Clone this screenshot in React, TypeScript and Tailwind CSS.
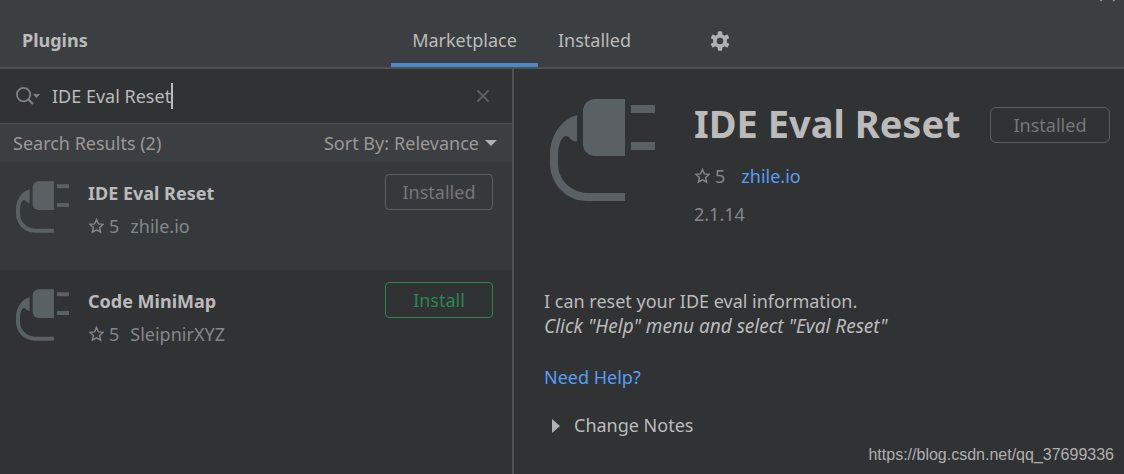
import { useState } from "react";

function PlugIcon({ className }: { className: string }) {
  return (
    <svg viewBox="0 0 105 102" className={className} fill="#5a6165" aria-hidden="true">
      <path d="M27 16C12 20 0 36 0 56V66C1 86 17 102 37 102H75V94H37C20 93 8 80 8 65V58C8 47 11 37 16 37C20 37 20 42.5 27 42.5Z" />
      <path d="M45 0H75V57H45A12 12 0 0 1 33 45V12A12 12 0 0 1 45 0Z" />
      <path d="M81 6H105V14H81ZM81 43H105V51H81Z" />
    </svg>
  );
}

function StarIcon() {
  return (
    <svg viewBox="0 0 16 16" className="size-4 shrink-0" fill="none" stroke="#85878a" strokeWidth="1.4" aria-hidden="true">
      <path d="M8.500 1.500L10.400 5.900L15 6.400L11.600 9.500L12.600 14.200L8.500 11.800L4.400 14.200L5.400 9.500L2 6.400L6.600 5.900Z" />
    </svg>
  );
}

function SearchIcon() {
  return (
    <svg viewBox="0 0 24 18" className="h-[18px] w-6" aria-hidden="true">
      <circle cx="7.6" cy="7.6" r="6.7" fill="none" stroke="#7b8388" strokeWidth="1.8" />
      <path d="M12.2 12.2L17 17" stroke="#7b8388" strokeWidth="2.2" />
      <path d="M17 7H24L20.500 11.200Z" fill="#7b8388" />
    </svg>
  );
}

function GearIcon() {
  return (
    <svg viewBox="0 0 20 20" className="size-5" aria-hidden="true">
      <g fill="#afb1b3">
        <rect x="7.800" y="0.300" width="4.400" height="19.400" rx="1" />
        <rect x="7.800" y="0.300" width="4.400" height="19.400" rx="1" transform="rotate(60 10 10)" />
        <rect x="7.800" y="0.300" width="4.400" height="19.400" rx="1" transform="rotate(120 10 10)" />
        <circle cx="10" cy="10" r="7" />
      </g>
      <circle cx="10" cy="10" r="3.300" fill="#3c3f41" />
    </svg>
  );
}

type Plugin = { name: string; author: string; rating: number; installed: boolean };

const plugins: Plugin[] = [
  { name: "IDE Eval Reset", author: "zhile.io", rating: 5, installed: true },
  { name: "Code MiniMap", author: "SleipnirXYZ", rating: 5, installed: false },
];

function PluginRow({ plugin, selected }: { plugin: Plugin; selected: boolean }) {
  return (
    <li className={`flex h-[108px] items-start pl-4 pr-[19px] ${selected ? "bg-[#35393b]" : ""}`}>
      <PlugIcon className="mt-[19px] h-[52px] w-[53px] shrink-0" />
      <div className="ml-[19px] mt-[17px] min-w-0 flex-1">
        <h3 className="leading-7 font-bold text-[#bbbbbb]">{plugin.name}</h3>
        <p className="mt-[3px] flex items-center leading-8 text-[#85878a]">
          <StarIcon />
          <span className="ml-[5px]">{plugin.rating}</span>
          <span className="ml-[11px]">{plugin.author}</span>
        </p>
      </div>
      {plugin.installed ? (
        <button disabled className="mt-3 h-9 w-[108px] rounded border border-[#5e6060] pt-px text-[#777777]">Installed</button>
      ) : (
        <button className="mt-3 h-9 w-[108px] rounded border border-[#2b8653] pt-px text-[#2b8653]">Install</button>
      )}
    </li>
  );
}

export default function App() {
  const [query, setQuery] = useState("IDE Eval Reset");
  return (
    <div className="relative flex min-h-screen flex-col bg-[#313234] font-['Noto_Sans',sans-serif] text-[18px] text-[#bbbbbb]">
      <header className="grid h-[69px] grid-cols-[391fr_733fr] border-b-2 border-[#515151] bg-[#3c3f41]">
        <h1 className="self-center pl-[22px] pt-[14px] font-bold">Plugins</h1>
        <nav className="flex">
          <button className="w-[147px] border-b-4 border-[#4a88c7] pt-[18px]">Marketplace</button>
          <button className="px-5 pt-[18px] pb-1">Installed</button>
          <button aria-label="Settings" className="ml-[59px] pt-[14px]"><GearIcon /></button>
        </nav>
        <button aria-label="Close" className="absolute top-0 right-[9px] h-[2px] overflow-hidden">
          <svg viewBox="0 0 15 2" className="h-[2px] w-[15px]" stroke="#afb1b3" strokeWidth="1.200" aria-hidden="true">
            <path d="M2.500 -1L0.500 1M12.500 -1L14.500 1" />
          </svg>
        </button>
      </header>
      <main className="grid flex-1 grid-cols-[514fr_610fr]">
        <section className="border-r-2 border-[#515151]">
          <div className="flex h-[55px] items-center border-b border-[#515151] pl-4 pr-[23px]">
            <SearchIcon />
            <input
              aria-label="Search plugins"
              value={query}
              onChange={(e) => setQuery(e.target.value)}
              className="ml-3 field-sizing-content bg-transparent outline-none"
            />
            <span className="h-[26px] w-[2px] bg-[#bbbbbb]" />
            <button aria-label="Clear search" className="ml-auto">
              <svg viewBox="0 0 12 12" className="size-3" stroke="#5f6669" strokeWidth="1.700" aria-hidden="true">
                <path d="M0.500 0.500L11.500 11.500M11.500 0.500L0.500 11.500" />
              </svg>
            </button>
          </div>
          <div className="flex h-[38px] items-center justify-between bg-[#3c3f41] pl-[13px] pr-[15px] text-[#999999]">
            <h2>Search Results (2)</h2>
            <div className="flex items-center">
              <label htmlFor="sort">Sort By:</label>
              <select id="sort" className="ml-[5px] appearance-none field-sizing-content bg-transparent outline-none">
                <option>Relevance</option>
              </select>
              <svg viewBox="0 0 12 6" className="ml-[6px] h-[6px] w-3" fill="#afb1b3" aria-hidden="true">
                <path d="M0 0H12L6 6Z" />
              </svg>
            </div>
          </div>
          <ul>
            {plugins.map((p, i) => (
              <PluginRow key={p.name} plugin={p} selected={i === 0} />
            ))}
          </ul>
        </section>
        <section className="flex flex-col pl-[30px] pr-[14px]">
          <div className="flex items-start pt-[30px]">
            <PlugIcon className="ml-[6px] h-[102px] w-[105px] shrink-0" />
            <div className="ml-[39px]">
              <h2 className="-mt-1 text-[38px] leading-[56px] font-bold whitespace-nowrap">IDE Eval Reset</h2>
              <p className="mt-[9px] flex items-center leading-8 text-[#85878a]">
                <StarIcon />
                <span className="ml-[5px]">{5}</span>
                <a href="https://zhile.io" className="ml-4 text-[#589df6]">zhile.io</a>
              </p>
              <p className="mt-[6px] leading-8 text-[#85878a]">2.1.14</p>
            </div>
            <button disabled className="mt-2 ml-auto h-9 w-[120px] rounded-md border border-[#5e6060] text-[#777777]">Installed</button>
          </div>
          <p className="mt-[59px] leading-[25px]">I can reset your IDE eval information.</p>
          <p className="text-[19px] leading-[25px] italic">Click "Help" menu and select "Eval Reset"</p>
          <a href="#help" className="mt-[26px] self-start leading-[25px] text-[#589df6]">Need Help?</a>
          <button aria-expanded="false" className="mt-[23px] ml-2 flex items-center self-start leading-[25px]">
            <svg viewBox="0 0 8 14" className="h-[14px] w-2" fill="#afb1b3" aria-hidden="true">
              <path d="M0 0L8 7L0 14Z" />
            </svg>
            <span className="ml-[14px]">Change Notes</span>
          </button>
          <p className="mt-auto -mr-1 mb-[7px] self-end font-['Liberation_Sans',sans-serif] text-[16px] leading-6 text-[#b0b0b0]">https://blog.csdn.net/qq_37699336</p>
        </section>
      </main>
    </div>
  );
}
